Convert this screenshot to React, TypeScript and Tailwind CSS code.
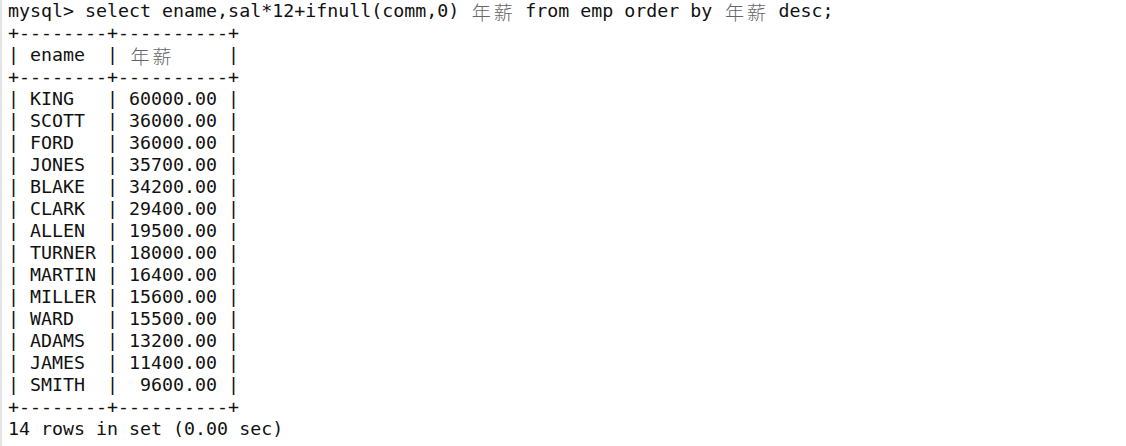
const sep = '+--------+----------+';

const rows: [string, string][] = [
  ['KING', '60000.00'],
  ['SCOTT', '36000.00'],
  ['FORD', '36000.00'],
  ['JONES', '35700.00'],
  ['BLAKE', '34200.00'],
  ['CLARK', '29400.00'],
  ['ALLEN', '19500.00'],
  ['TURNER', '18000.00'],
  ['MARTIN', '16400.00'],
  ['MILLER', '15600.00'],
  ['WARD', '15500.00'],
  ['ADAMS', '13200.00'],
  ['JAMES', '11400.00'],
  ['SMITH', ' 9600.00'],
];

// CJK glyphs take two terminal cells
function Wide({ text }: { text: string }) {
  return (
    <span className="inline-flex align-top h-[22px] items-center text-[#666] font-['Noto_Sans_CJK_SC',sans-serif] font-light text-[19px] leading-none">
      {text.split('').map((c, i) => (
        <span key={i} className="w-[22px] text-center">
          {c}
        </span>
      ))}
    </span>
  );
}

function Line({ children }: { children: React.ReactNode }) {
  return <div className="h-[22px] whitespace-pre">{children}</div>;
}

export default function App() {
  return (
    <div className="w-[1126px] h-[446px] bg-white border-l-2 border-[#e4e4e4] overflow-hidden">
      <div className="pl-[6px] font-['DejaVu_Sans_Mono',monospace] text-[18.3px] leading-[22px] text-[#111]">
        <Line>
          {'mysql> select ename,sal*12+ifnull(comm,0) '}
          <Wide text="年薪" />
          {' from emp order by '}
          <Wide text="年薪" />
          {' desc;'}
        </Line>
        <Line>{sep}</Line>
        <Line>
          {'| ename  | '}
          <Wide text="年薪" />
          {'     |'}
        </Line>
        <Line>{sep}</Line>
        {rows.map(([name, sal]) => (
          <Line key={name}>{`| ${name.padEnd(6, ' ')} | ${sal} |`}</Line>
        ))}
        <Line>{sep}</Line>
        <Line>{'14 rows in set (0.00 sec)'}</Line>
      </div>
    </div>
  );
}
